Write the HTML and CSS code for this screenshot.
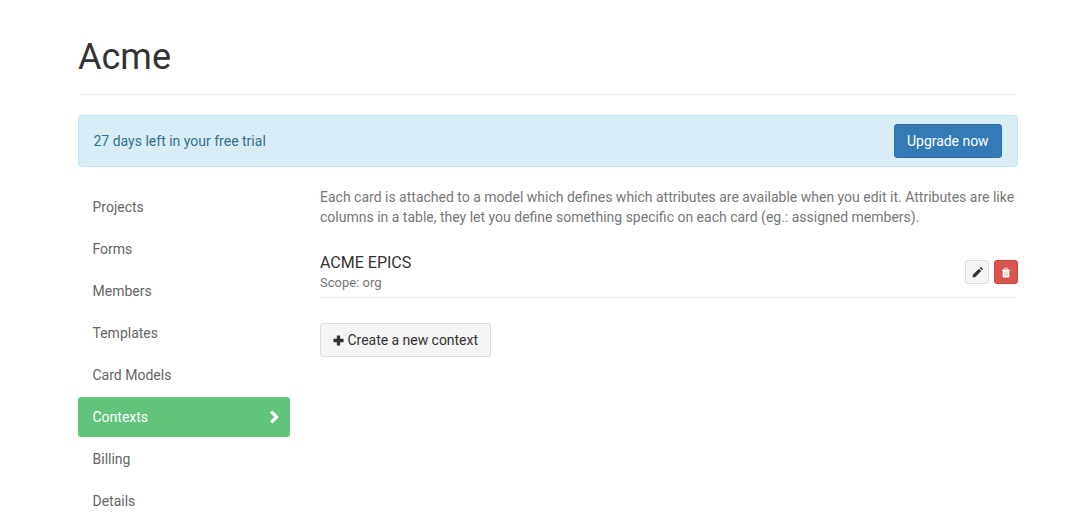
FILE: index.html
```
<!DOCTYPE html>
<html lang="en">
<head>
<meta charset="utf-8">
<title>Acme</title>
<link rel="stylesheet" href="styles.css">
</head>
<body>
<div class="container">
  <header class="page-header"><h1>Acme</h1></header>
  <div class="alert">
    <span>27 days left in your free trial</span>
    <a class="btn btn-primary">Upgrade now</a>
  </div>
  <div class="layout">
    <nav class="nav">
      <a class="nav-item">Projects</a>
      <a class="nav-item">Forms</a>
      <a class="nav-item">Members</a>
      <a class="nav-item">Templates</a>
      <a class="nav-item">Card Models</a>
      <a class="nav-item active">Contexts
        <svg class="chev" viewBox="0 0 10 14" width="10" height="14"><path d="M2.2 1.6 7.6 7 2.2 12.4" fill="none" stroke="#fff" stroke-width="3.2"/></svg>
      </a>
      <a class="nav-item">Billing</a>
      <a class="nav-item">Details</a>
    </nav>
    <main class="content">
      <p class="intro">Each card is attached to a model which defines which attributes are available when you edit it. Attributes are like columns in a table, they let you define something specific on each card (eg.: assigned members).</p>
      <div class="row">
        <div class="row-text">
          <div class="row-title">ACME EPICS</div>
          <div class="row-sub">Scope: org</div>
        </div>
        <div class="row-actions">
          <a class="icon-btn edit"><svg viewBox="0 0 12 12" width="11" height="11"><path d="M0.5 11.5 1.2 8.3 7.6 1.9 10.1 4.4 3.7 10.8ZM8.4 1.1 9.2 0.4Q9.7 0 10.2 0.4L11.6 1.8Q12 2.3 11.6 2.8L10.9 3.6Z" fill="#333"/></svg></a>
          <a class="icon-btn del"><svg viewBox="0 0 12 12" width="10" height="11"><path d="M1 2.5H11V3.5H10V11Q10 12 9 12H3Q2 12 2 11V3.5H1ZM4 1Q4 .3 4.7 .3H7.3Q8 .3 8 1V2H7V1.2H5V2H4Z" fill="#fff"/><path d="M4.3 5V10.3M6 5V10.3M7.7 5V10.3" stroke="#e8a5a3" stroke-width=".7"/></svg></a>
        </div>
      </div>
      <a class="btn btn-default create"><svg viewBox="0 0 12 12" width="11" height="11"><path d="M4.2 0.5H7.8V4.2H11.5V7.8H7.8V11.5H4.2V7.8H0.5V4.2H4.2Z" fill="#333"/></svg>Create a new context</a>
    </main>
  </div>
</div>
</body>
</html>
```
FILE: styles.css
```
* { box-sizing: border-box; }
html, body { margin: 0; height: 520px; overflow: hidden; }
body { background: #fff; font-family: Roboto, sans-serif; font-size: 14px; line-height: 20px; color: #777; }
.container { width: 940px; margin-left: 78px; }
.page-header { padding-top: 32px; height: 95px; border-bottom: 1px solid #eee; }
.page-header h1 { margin: 0; font-size: 36px; font-weight: 400; line-height: 50px; color: #333; }
.alert { margin-top: 20px; height: 52px; padding: 0 15px 0 14.5px; display: flex; align-items: center; justify-content: space-between; background: #d9edf7; border: 1px solid #bce8f1; border-radius: 4px; color: #31708f; }
.btn { display: inline-flex; align-items: center; border: 1px solid transparent; border-radius: 3px; letter-spacing: -0.03px; }
.btn-primary { height: 34px; width: 108px; padding: 0 12px; background: #337ab7; border-color: #2e6da4; color: #fff; }
.layout { display: flex; margin-top: 20px; }
.nav { width: 212px; flex: none; display: flex; flex-direction: column; gap: 2px; }
.nav-item { height: 40px; padding: 0 11px 0 14.5px; display: flex; align-items: center; justify-content: space-between; color: #666; border-radius: 3px; }
.nav-item.active { background: #62c47a; color: #fff; }
.content { margin-left: 30px; flex: 1; }
.intro { margin: 0; }
.row { margin-top: 25px; height: 46px; display: flex; justify-content: space-between; align-items: flex-start; border-bottom: 1px solid #eee; }
.row-title { font-size: 16px; line-height: 22px; color: #333; }
.row-sub { font-size: 13px; line-height: 18px; color: #777; }
.row-actions { display: flex; gap: 5px; margin-top: 8px; }
.icon-btn { width: 24px; height: 24px; display: flex; align-items: center; justify-content: center; border: 1px solid #ccc; border-radius: 3px; }
.edit { background: #f5f5f5; border-color: #ddd; }
.del { background: #d9534f; border-color: #d43f3a; }
.create { margin-top: 25px; height: 34px; width: 171px; padding: 0 12px; gap: 3.5px; background: #f5f5f5; border-color: #ddd; color: #333; }
```
